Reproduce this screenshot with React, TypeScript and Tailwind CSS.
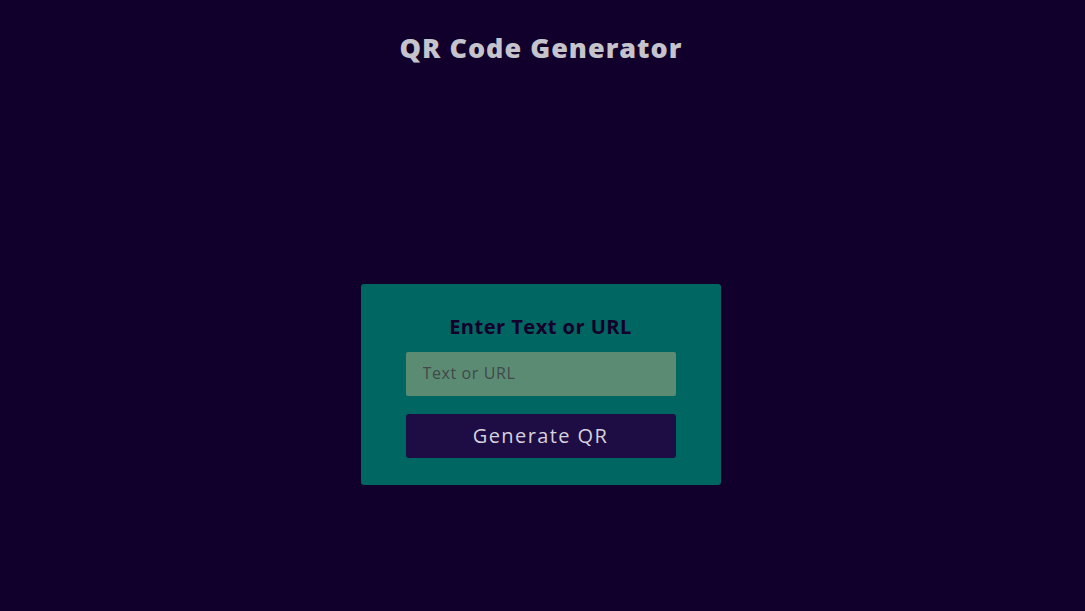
export default function App() {
  return (
    <div
      className="min-h-screen w-full bg-[#11002b] flex flex-col items-center"
      style={{ fontFamily: '"Open Sans", "Liberation Sans", sans-serif' }}
    >
      {/* Title */}
      <h1 className="mt-[29px] mr-[3px] text-[27px] leading-[38px] font-extrabold text-[#c5c3cc] tracking-[1px]">
        QR Code Generator
      </h1>

      {/* Card */}
      <div className="mt-[217px] mr-[4px] w-[360px] h-[201px] bg-[#006661] rounded-[3px] flex flex-col items-center pt-[29px]">
        <h2 className="text-[20px] leading-[28px] font-bold text-[#12002b] tracking-[0.5px]">Enter Text or URL</h2>
        <input
          type="text"
          placeholder="Text or URL"
          className="mt-[11px] w-[270px] h-[44px] bg-[#5c8b74] rounded-[2px] px-[17px] pb-[3px] text-[16px] tracking-[0.6px] text-[#333] placeholder:text-[#414848] outline-none"
        />
        <button className="mt-[18px] w-[270px] h-[44px] bg-[#1e0c44] rounded-[3px] text-[20px] tracking-[1.4px] text-[#d6d2dc]">
          Generate QR
        </button>
      </div>
    </div>
  );
}
